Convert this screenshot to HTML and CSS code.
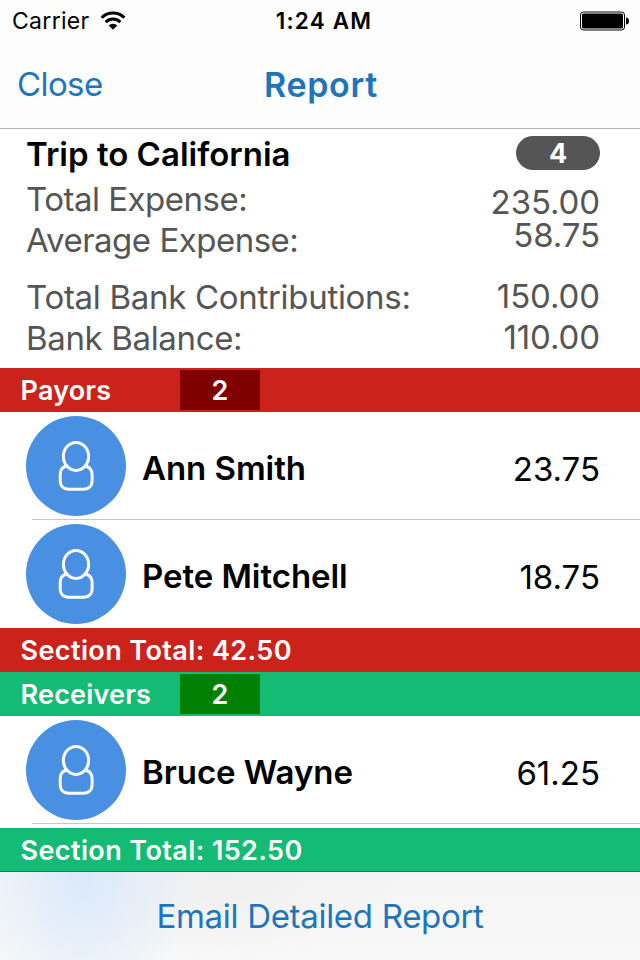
FILE: index.html
```
<!DOCTYPE html>
<html lang="en">
  <head>
    <meta charset="utf-8">
    <title>Report</title>
    <link rel="stylesheet" href="styles.css">
  </head>
  <body>
    <svg class="defs" width="0" height="0">
      <symbol id="person" viewBox="0 0 100 100">
        <ellipse cx="50" cy="40.4" rx="12.6" ry="14"/>
        <path d="M40 50.2C36.400 51.200 34.200 54.500 34.200 58.500V64.500C34.200 70 37.500 73.300 43 73.300H57.300C62.800 73.300 66.100 70 66.100 64.500V58.500C66.100 54.500 63.600 51.200 60 50.200"/>
      </symbol>
    </svg>

    <header class="status">
      <div class="carrier">
        <span class="carrier-name">Carrier</span>
        <svg class="wifi" width="26" height="20" viewBox="0 0 26 20">
          <path d="M1.6 6.7A16.3 16.3 0 0 1 24.4 6.7M5.7 11.1A10.4 10.4 0 0 1 20.3 11.1" fill="none" stroke="#000" stroke-width="3"/>
          <path d="M13 18.8L8.7 14.5A6.1 6.1 0 0 1 17.3 14.5Z"/>
        </svg>
      </div>
      <span class="time">1:24 AM</span>
      <svg class="battery" width="50" height="20" viewBox="0 0 50 20">
        <rect x="0.5" y="1" width="44" height="18" rx="3" fill="none" stroke="#000"/>
        <rect x="2" y="2.5" width="41" height="15" rx="1.5"/>
        <path d="M46 6.5C48 6.5 49 8 49 10S48 13.500 46 13.500Z"/>
      </svg>
    </header>

    <nav class="navbar">
      <a class="close">Close</a>
      <h1 class="nav-title">Report</h1>
    </nav>

    <section class="summary">
      <div class="labels">
        <h2 class="trip">Trip to California</h2>
        <span class="l-total">Total Expense:</span>
        <span class="l-average">Average Expense:</span>
        <span class="l-bank">Total Bank Contributions:</span>
        <span class="l-balance">Bank Balance:</span>
      </div>
      <div class="values">
        <span class="badge">4</span>
        <span class="v-total">235.00</span>
        <span class="v-average">58.75</span>
        <span class="v-bank">150.00</span>
        <span class="v-balance">110.00</span>
      </div>
    </section>

    <section class="payors">
      <div class="bar"><span class="bar-title">Payors</span><span class="count">2</span></div>
      <div class="row">
        <svg class="avatar"><use href="#person"/></svg>
        <span class="name">Ann Smith</span>
        <span class="amount">23.75</span>
      </div>
      <div class="row last">
        <svg class="avatar"><use href="#person"/></svg>
        <span class="name">Pete Mitchell</span>
        <span class="amount">18.75</span>
      </div>
      <div class="bar"><span class="total">Section Total: 42.50</span></div>
    </section>

    <section class="receivers">
      <div class="bar"><span class="bar-title">Receivers</span><span class="count">2</span></div>
      <div class="row">
        <svg class="avatar"><use href="#person"/></svg>
        <span class="name">Bruce Wayne</span>
        <span class="amount">61.25</span>
      </div>
      <div class="bar bar-end"><span class="total">Section Total: 152.50</span></div>
    </section>

    <footer class="toolbar"><a class="email">Email Detailed Report</a></footer>
  </body>
</html>
```
FILE: styles.css
```
body {
  margin: 0;
  width: 640px;
  height: 960px;
  overflow: hidden;
  display: flex;
  flex-direction: column;
  background: #fff;
  color: #000;
  font: 400 33px Inter, "Liberation Sans", sans-serif;
  white-space: nowrap;
}
h1,
h2 {
  margin: 0;
  font-size: 33px;
  font-weight: 600;
}
.defs {
  display: none;
}

.status {
  display: grid;
  grid-template-columns: 1fr auto 1fr;
  align-items: center;
  box-sizing: border-box;
  height: 40px;
  padding: 1px 10px 0 12px;
  background: #fdfdfd;
  font-size: 23px;
}
.carrier {
  display: flex;
  align-items: center;
  gap: 10px;
  letter-spacing: 0.3px;
}
.time {
  padding-left: 6px;
  font-weight: 600;
  font-size: 22.5px;
  letter-spacing: 1.2px;
}
.battery {
  justify-self: end;
}

.navbar {
  display: grid;
  grid-template-columns: 1fr auto 1fr;
  align-items: center;
  box-sizing: border-box;
  height: 89px;
  padding: 0 17px;
  border-bottom: 1px solid #b2b2b2;
  background: #fdfdfd;
  color: #1d75bd;
}
.close {
  letter-spacing: -0.6px;
}
.nav-title {
  padding-left: 2px;
  font-size: 34px;
  letter-spacing: 0.7px;
}

.summary {
  display: flex;
  justify-content: space-between;
  height: 239px;
  padding: 0 40px 0 26px;
  color: #555;
}
.labels,
.values {
  display: flex;
  flex-direction: column;
}
.labels {
  letter-spacing: -0.5px;
}
.values {
  align-items: flex-end;
  letter-spacing: -0.1px;
}
.trip {
  color: #000;
  line-height: 50px;
  letter-spacing: 0;
}
.l-total {
  line-height: 40px;
}
.l-average {
  line-height: 42px;
}
.l-bank {
  margin-top: 15px;
  line-height: 42px;
  letter-spacing: -0.3px;
}
.l-balance {
  line-height: 40px;
  letter-spacing: -0.35px;
}
.badge {
  width: 84px;
  height: 34px;
  margin: 7px 0 16px;
  border-radius: 17px;
  background: #555;
  color: #fff;
  font-size: 27px;
  font-weight: 700;
  line-height: 35px;
  text-align: center;
}
.v-total {
  line-height: 32px;
}
.v-average {
  line-height: 34px;
}
.v-bank {
  margin-top: 24px;
  line-height: 40px;
}
.v-balance {
  line-height: 42px;
}

.bar {
  display: flex;
  align-items: center;
  box-sizing: border-box;
  height: 44px;
  padding-left: 20.5px;
  color: #fff;
  font-size: 27px;
  font-weight: 600;
}
.bar-title {
  width: 159.5px;
  letter-spacing: 0.2px;
}
.total {
  letter-spacing: 0.4px;
}
.count {
  width: 80px;
  height: 40px;
  line-height: 41px;
  text-align: center;
}
.payors .bar {
  background: #cb231b;
}
.payors .count {
  background: #800000;
}
.receivers .bar {
  background: #14bb74;
}
.receivers .count {
  background: #008000;
}
.receivers .bar-end {
  margin-top: 4px;
  padding-top: 1px;
  border-bottom: 1px solid #0e8351;
}

.row {
  display: flex;
  align-items: center;
  box-sizing: border-box;
  height: 108px;
  padding: 0 40px 0 26px;
  background: linear-gradient(#c8c7cc, #c8c7cc) 32px 107px / 608px 1px no-repeat;
}
.row.last {
  background: none;
}
.avatar {
  width: 100px;
  height: 100px;
  border-radius: 50%;
  background: #4990e2;
  fill: none;
  stroke: #fff;
  stroke-width: 3;
}
.name {
  margin: 0 auto 0 16px;
  padding-top: 4px;
  font-weight: 600;
  letter-spacing: -0.05px;
}
.amount {
  padding-top: 6px;
}

.toolbar {
  display: flex;
  align-items: center;
  justify-content: center;
  height: 88px;
  background:
    radial-gradient(ellipse 110px 150px at 82px 0, #d9e9fc, rgba(217, 233, 252, 0)),
    radial-gradient(ellipse 190px 90px at 220px 0, #efefef, rgba(239, 239, 239, 0)),
    linear-gradient(#f5f5f5, #f8f8f8);
  color: #1d75bd;
}
.email {
  letter-spacing: -0.3px;
}
```
